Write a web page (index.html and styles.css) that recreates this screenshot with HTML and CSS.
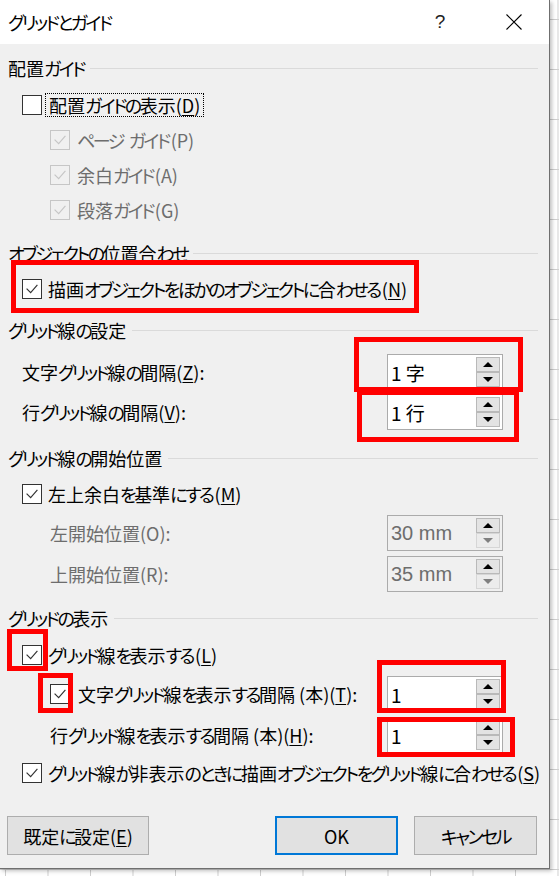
FILE: index.html
```html
<!DOCTYPE html>
<html lang="ja">
<head>
<meta charset="utf-8">
<title>グリッドとガイド</title>
<link rel="stylesheet" href="styles.css">
</head>
<body>
<div class="dialog">
  <div class="titlebar">
    <span class="title"><span class="k">グリッドとガイド</span></span>
    <span class="help">?</span>
    <span class="close"><svg width="16" height="16" viewBox="0 0 16 16"><path d="M0.5 0.5L15.5 15.5M15.5 0.5L0.5 15.5" stroke="#000" stroke-width="1.1" fill="none"/></svg></span>
  </div>
  <div class="content">
    <div class="section m12"><span>配置<span class="k">ガイド</span></span><i class="rule"></i></div>
    <div class="row h35 m7 lvl1"><span class="box"></span><span class="lbl focus">配置<span class="k">ガイドの</span>表示(<u>D</u>)</span></div>
    <div class="row h35 lvl2 dis"><span class="box"><svg viewBox="0 0 20 20"><path d="M4 9.5L8.5 14L16 5.5"/></svg></span><span class="lbl"><span class="k">ページ</span><span class="sp"> </span><span class="k e">ガイド</span>(P)</span></div>
    <div class="row h35 lvl2 dis"><span class="box"><svg viewBox="0 0 20 20"><path d="M4 9.5L8.5 14L16 5.5"/></svg></span><span class="lbl">余白<span class="k e">ガイド</span>(A)</span></div>
    <div class="row h35 lvl2 dis"><span class="box"><svg viewBox="0 0 20 20"><path d="M4 9.5L8.5 14L16 5.5"/></svg></span><span class="lbl">段落<span class="k e">ガイド</span>(G)</span></div>

    <div class="section m14"><span><span class="k">オブジェクトの</span>位置合<span class="k">わせ</span></span><i class="rule"></i></div>
    <div class="row h36 m6 lvl1"><span class="box"><svg viewBox="0 0 20 20"><path d="M4 9.5L8.5 14L16 5.5"/></svg></span><span class="lbl">描画<span class="k">オブジェクトをほかのオブジェクトに</span>合<span class="k e">わせる</span>(<u>N</u>)</span></div>

    <div class="section m11"><span><span class="k">グリッド</span>線<span class="k">の</span>設定</span><i class="rule"></i></div>
    <div class="spinrow h40 m10 ind1"><span class="lbl">文字<span class="k">グリッド</span>線<span class="k">の</span>間隔(<u>Z</u>):</span>
      <span class="spin"><span class="val">1 字</span><span class="btns"><span class="up"><i></i></span><span class="dn"><i></i></span></span></span></div>
    <div class="spinrow h40 ind1"><span class="lbl">行<span class="k">グリッド</span>線<span class="k">の</span>間隔(<u>V</u>):</span>
      <span class="spin"><span class="val">1 行</span><span class="btns"><span class="up"><i></i></span><span class="dn"><i></i></span></span></span></div>

    <div class="section m14"><span><span class="k">グリッド</span>線<span class="k">の</span>開始位置</span><i class="rule"></i></div>
    <div class="row h36 m6 lvl1"><span class="box"><svg viewBox="0 0 20 20"><path d="M4 9.5L8.5 14L16 5.5"/></svg></span><span class="lbl">左上余白<span class="k">を</span>基準<span class="k e">にする</span>(<u>M</u>)</span></div>
    <div class="spinrow h41 ind2 dis"><span class="lbl">左開始位置(O):</span>
      <span class="spin off"><span class="val mm">30 mm</span><span class="btns"><span class="up"><i></i></span><span class="dn"><i></i></span></span></span></div>
    <div class="spinrow h41 ind2 dis"><span class="lbl">上開始位置(R):</span>
      <span class="spin off"><span class="val mm">35 mm</span><span class="btns"><span class="up"><i></i></span><span class="dn"><i></i></span></span></span></div>

    <div class="section m12"><span><span class="k">グリッドの</span>表示</span><i class="rule"></i></div>
    <div class="row h38 m6 lvl1"><span class="box"><svg viewBox="0 0 20 20"><path d="M4 9.5L8.5 14L16 5.5"/></svg></span><span class="lbl"><span class="k">グリッド</span>線<span class="k">を</span>表示<span class="k e">する</span>(<u>L</u>)</span></div>
    <div class="spinrow h40 ind2"><span class="cbl"><span class="box"><svg viewBox="0 0 20 20"><path d="M4 9.5L8.5 14L16 5.5"/></svg></span><span class="lbl">文字<span class="k">グリッド</span>線<span class="k">を</span>表示<span class="k">する</span>間隔 (本)(<u>T</u>):</span></span>
      <span class="spin"><span class="val">1</span><span class="btns"><span class="up"><i></i></span><span class="dn"><i></i></span></span></span></div>
    <div class="spinrow h42 ind2"><span class="lbl">行<span class="k">グリッド</span>線<span class="k">を</span>表示<span class="k">する</span>間隔 (本)(<u>H</u>):</span>
      <span class="spin"><span class="val">1</span><span class="btns"><span class="up"><i></i></span><span class="dn"><i></i></span></span></span></div>
    <div class="row h34 lvl1"><span class="box"><svg viewBox="0 0 20 20"><path d="M4 9.5L8.5 14L16 5.5"/></svg></span><span class="lbl"><span class="k">グリッド</span>線<span class="k">が</span>非表示<span class="k">のときに</span>描画<span class="k">オブジェクトをグリッド</span>線<span class="k">に</span>合<span class="k e">わせる</span>(<u>S</u>)</span></div>

    <div class="buttons">
      <span class="btn wide">既定<span class="k">に</span>設定(<u>E</u>)</span>
      <span class="right">
        <span class="btn ok">OK</span>
        <span class="btn"><span class="k">キャンセル</span></span>
      </span>
    </div>
  </div>

  <i class="mark m-a"></i>
  <i class="mark m-b"></i>
  <i class="mark m-c"></i>
  <i class="mark m-d"></i>
  <i class="mark m-e"></i>
  <i class="mark m-f"></i>
  <i class="mark m-g"></i>
</div>
</body>
</html>
```
FILE: styles.css
```css
html, body {
  margin: 0;
  padding: 0;
}
body {
  width: 559px;
  height: 876px;
  overflow: hidden;
  background-color: #ffffff;
  background-image:
    linear-gradient(to right, #cfcfcf 1px, transparent 1px),
    linear-gradient(to bottom, #cfcfcf 1px, transparent 1px);
  background-size: 42.5px 50px;
  background-position: 5px 19px;
  font-family: "Noto Sans CJK JP", "Noto Sans", sans-serif;
  font-feature-settings: "palt";
  color: #000;
}
.k { letter-spacing: -2.5px; }
.k.e { margin-right: 2px; }
.sp { display: inline-block; width: 6px; }
.dialog {
  position: relative;
  width: 549px;
  height: 868px;
  background: #f0f0f0;
  border-right: 1px solid #6f6f6f;
  border-bottom: 1px solid #6f6f6f;
  box-shadow: 2px 2px 4px rgba(0,0,0,0.25);
  display: flex;
  flex-direction: column;
}
.titlebar {
  height: 44px;
  background: #fff;
  display: flex;
  align-items: center;
  padding-left: 8px;
  font-size: 18px;
}
.title { flex: 1; }
.help {
  font-family: "Liberation Sans", sans-serif;
  font-size: 19px;
  width: 18px;
  text-align: center;
  margin-right: 57px;
  font-weight: 300;
  color: #222;
}
.close {
  width: 16px;
  height: 16px;
  margin-right: 27px;
  display: flex;
}
.content {
  display: flex;
  flex-direction: column;
  font-size: 18px;
}
.section {
  display: flex;
  align-items: center;
  height: 24px;
  padding-left: 8px;
  padding-right: 11px;
}
.rule {
  flex: 1;
  height: 1px;
  background: #dadada;
  margin-left: 6px;
}
.m6 { margin-top: 6px; }
.m7 { margin-top: 7px; }
.m10 { margin-top: 10px; }
.m11 { margin-top: 11px; }
.m12 { margin-top: 12px; }
.m14 { margin-top: 14px; }
.h34 { height: 34px; }
.h35 { height: 35px; }
.h36 { height: 36px; }
.h38 { height: 38px; }
.h40 { height: 40px; }
.h41 { height: 41px; }
.h42 { height: 42px; }

.row {
  display: flex;
  align-items: center;
}
.lvl1 { padding-left: 22px; }
.lvl2 { padding-left: 50px; }
.box {
  width: 20px;
  height: 20px;
  box-sizing: border-box;
  border: 1px solid #333;
  background: #fff;
  margin-right: 6px;
  flex: none;
  display: flex;
}
.box svg {
  width: 18px;
  height: 18px;
}
.box svg path {
  fill: none;
  stroke: #333;
  stroke-width: 1.3;
}
.dis { color: #6d6d6d; }
.dis .box {
  border-color: #c6c6c6;
  background: #f0f0f0;
  margin-right: 7px;
}
.dis .box svg path { stroke: #c6c6c6; }
.lbl { white-space: nowrap; line-height: 1; }
.focus {
  outline: 1px dotted #000;
  outline-offset: 2px;
  padding: 0 1px;
}
u { text-underline-offset: 2px; }

.spinrow {
  display: flex;
  align-items: center;
  justify-content: space-between;
  padding-right: 46px;
}
.ind1 { padding-left: 22px; }
.ind2 { padding-left: 50px; }
.cbl {
  display: flex;
  align-items: center;
}
.cbl .box { margin-right: 8px; }
.spin {
  width: 116px;
  height: 36px;
  box-sizing: border-box;
  border: 1px solid #ababab;
  background: #fff;
  display: flex;
  align-items: center;
  justify-content: space-between;
  padding: 2px 2px 2px 3px;
}
.val {
  font-size: 19px;
  line-height: 1;
  white-space: nowrap;
}
.val.mm {
  font-family: "Liberation Sans", sans-serif;
  font-size: 20px;
  color: #6d6d6d;
}
.spin.off { background: #f0f0f0; }
.btns {
  width: 24px;
  height: 30px;
  display: flex;
  flex-direction: column;
}
.btns span {
  flex: 1;
  box-sizing: border-box;
  border: 1px solid #b9b9b9;
  background: #e3e3e3;
  display: flex;
  align-items: center;
  justify-content: center;
}
.btns .up i {
  width: 0; height: 0;
  border-left: 5px solid transparent;
  border-right: 5px solid transparent;
  border-bottom: 5px solid #000;
}
.btns .dn i {
  width: 0; height: 0;
  border-left: 5px solid transparent;
  border-right: 5px solid transparent;
  border-top: 5px solid #000;
}
.spin.off .dn { background: #ececec; border-color: #d6d6d6; }
.spin.off .dn i { border-top-color: #808080; }

.buttons {
  margin-top: 26px;
  height: 39px;
  display: flex;
  padding: 0 12px 0 7px;
}
.right {
  margin-left: auto;
  display: flex;
  gap: 16px;
}
.btn {
  width: 123px;
  height: 39px;
  box-sizing: border-box;
  border: 1px solid #adadad;
  background: #e1e1e1;
  display: flex;
  align-items: center;
  justify-content: center;
  font-size: 18px;
}
.btn.wide { width: 142px; }
.btn.ok { border: 2px solid #0078d7; }

.mark {
  position: absolute;
  border: 5px solid #ff0000;
  box-sizing: border-box;
}
.m-a { left: 11px; top: 260px; width: 408px; height: 53px; }
.m-b { left: 354px; top: 337px; width: 169px; height: 55px; }
.m-c { left: 357px; top: 390px; width: 162px; height: 52px; }
.m-d { left: 7px; top: 629px; width: 41px; height: 42px; }
.m-e { left: 38px; top: 673px; width: 35px; height: 40px; }
.m-f { left: 377px; top: 660px; width: 129px; height: 53px; }
.m-g { left: 377px; top: 717px; width: 138px; height: 40px; }
```
